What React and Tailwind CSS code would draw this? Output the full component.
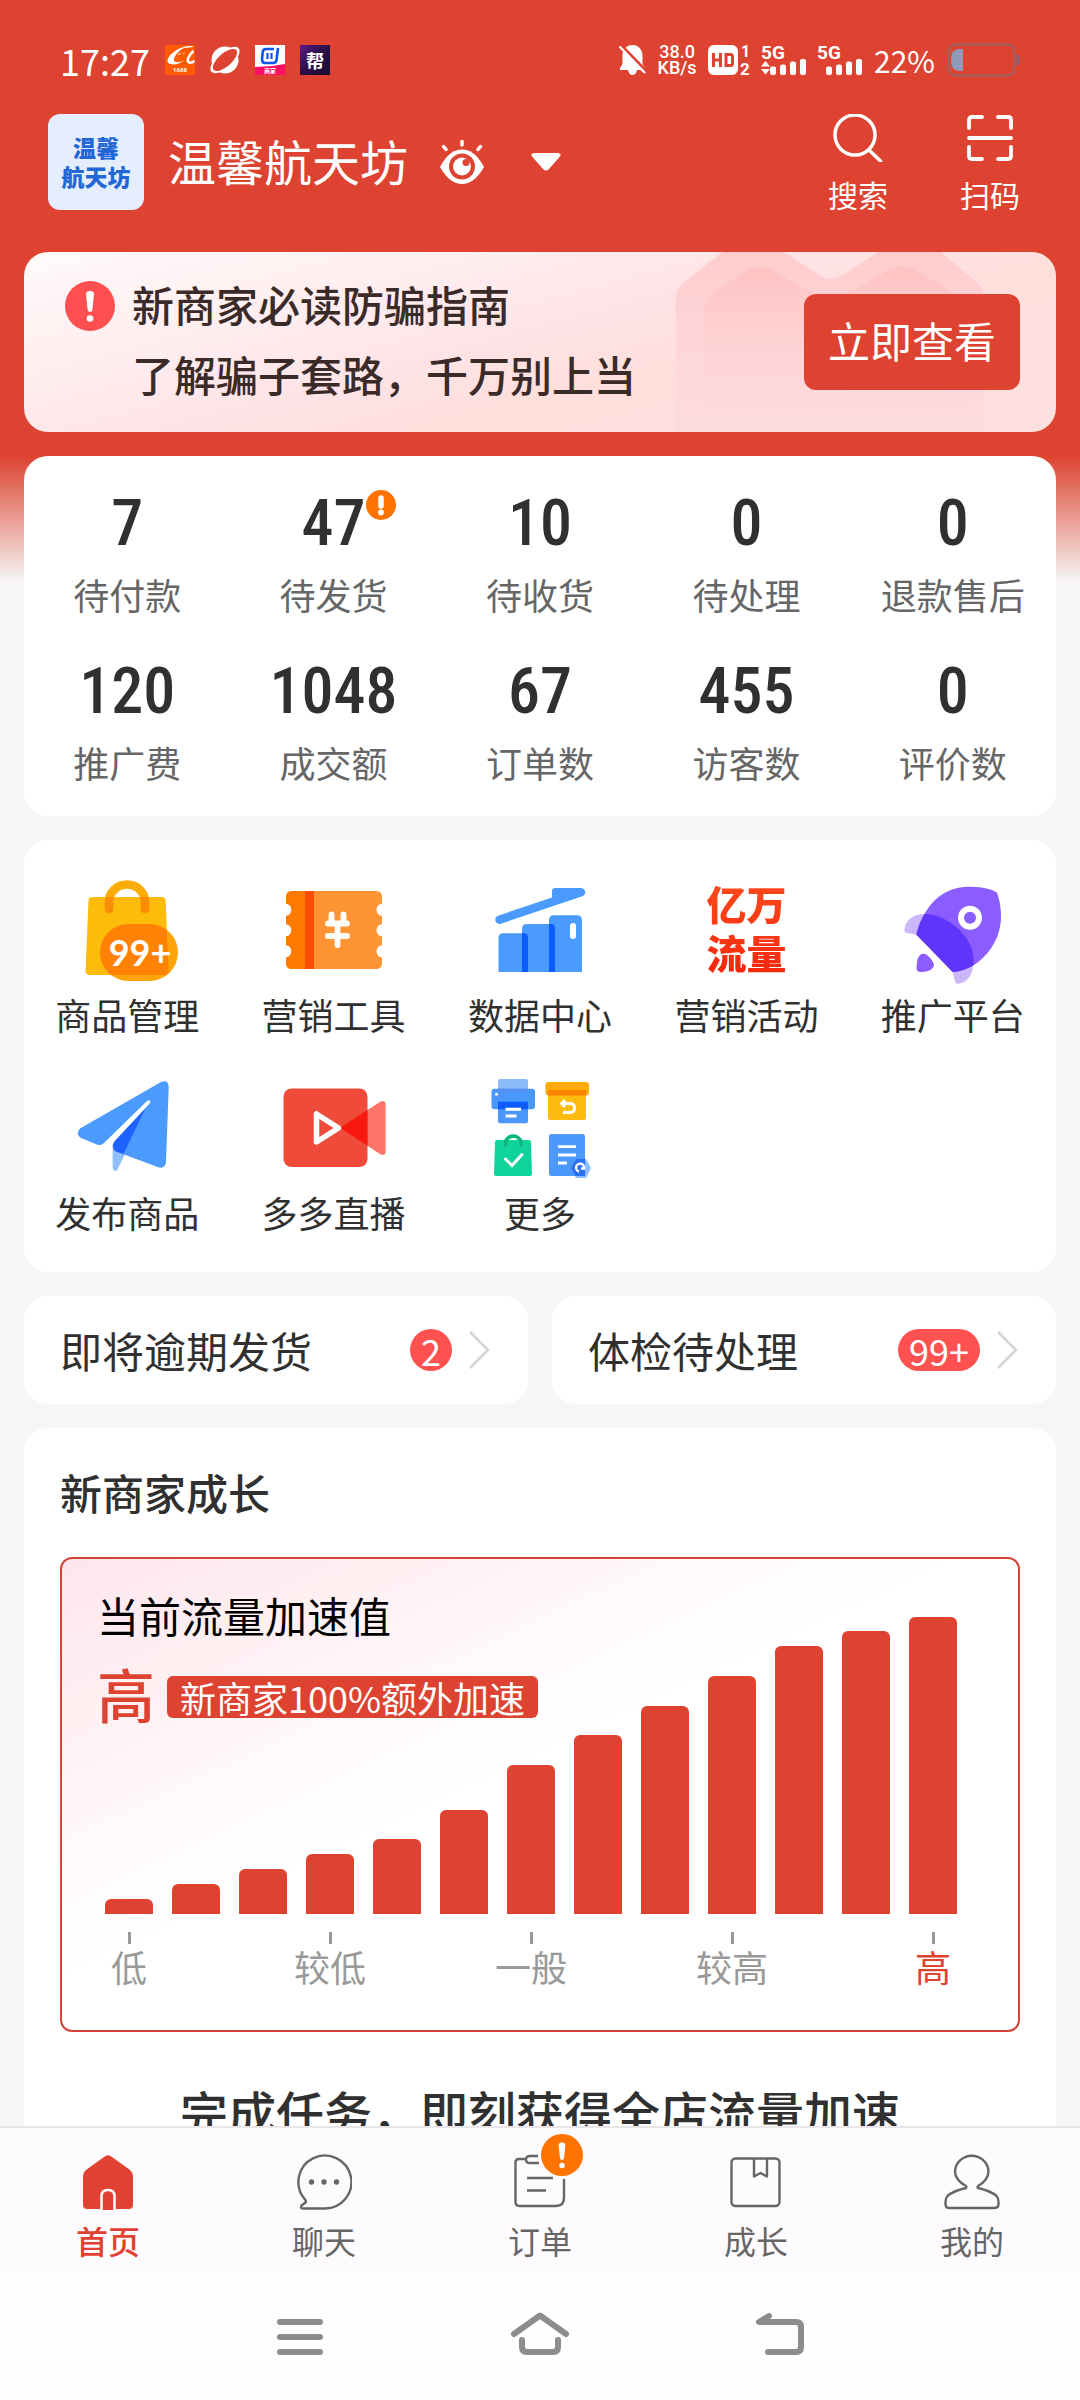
import React from "react";

const stats = [
  { value: "7", label: "待付款" },
  { value: "47", label: "待发货", alert: true },
  { value: "10", label: "待收货" },
  { value: "0", label: "待处理" },
  { value: "0", label: "退款售后" },
  { value: "120", label: "推广费" },
  { value: "1048", label: "成交额" },
  { value: "67", label: "订单数" },
  { value: "455", label: "访客数" },
  { value: "0", label: "评价数" },
];

const bars = [
  { h: 15, label: "低" },
  { h: 30 },
  { h: 45 },
  { h: 60, label: "较低" },
  { h: 75 },
  { h: 104 },
  { h: 149, label: "一般" },
  { h: 179 },
  { h: 208 },
  { h: 238, label: "较高" },
  { h: 268 },
  { h: 283 },
  { h: 297, label: "高", active: true },
];

/* ---------- status bar ---------- */

function AlibabaIcon() {
  return (
    <svg viewBox="0 0 30 30" className="size-[30px]" aria-hidden="true">
      <rect width="30" height="30" fill="#ff5a00" />
      <path d="M29 1.5C19-1 5 7 2.500 15C1.500 20.500 12 21 19 15.500C14 17.500 8.500 18 9 14.500C9.500 10 15 4 20 3C23 2.400 25 3 29 1.500Z" fill="#fff" />
      <path d="M13 9.500l3-1M18 8.500l1.500-.5" stroke="#fff" strokeWidth="1" />
      <path d="M28.500 6C24 10 21.500 15 23.500 17C25 18.300 27.500 17.500 29.500 16" fill="none" stroke="#fff" strokeWidth="2.600" />
      <text x="15" y="27" textAnchor="middle" fontSize="6" fontWeight="700" fill="#fff" fontFamily="Roboto, sans-serif">1688</text>
    </svg>
  );
}

function PlanetIcon() {
  return (
    <svg viewBox="0 0 30 30" className="size-[30px]" aria-hidden="true">
      <circle cx="15" cy="15" r="13.500" fill="#fff" />
      <ellipse cx="15" cy="15" rx="18" ry="8" transform="rotate(-41 15 15)" fill="#fff" />
      <ellipse cx="15" cy="15" rx="15" ry="6.500" transform="rotate(-41 15 15)" fill="#dd4330" />
    </svg>
  );
}

function ShopIcon() {
  return (
    <svg viewBox="0 0 30 30" className="size-[30px]" aria-hidden="true">
      <rect width="30" height="30" fill="#fff" />
      <path d="M0 22Q15 22 30 19V30H0Z" fill="#ff0f63" />
      <path d="M19 4H11Q8 4 7.700 7L7 14Q7 18 10 18H18Q21 18 21.500 15L23 3" fill="none" stroke="#0a55f0" strokeWidth="2.600" />
      <path d="M12.500 8v6M16.500 8v6" stroke="#0a55f0" strokeWidth="2.200" />
      <text x="15" y="28" textAnchor="middle" fontSize="6" fontWeight="700" fill="#fff" fontFamily="'Noto Sans CJK SC', sans-serif">商家</text>
    </svg>
  );
}

function HelpIcon() {
  return (
    <span className="flex size-[30px] items-center justify-center bg-linear-to-br from-[#5b1a8c] via-[#2a0f45] to-[#1b0b33] text-[18px] leading-[30px] font-bold text-white">
      帮
    </span>
  );
}

function BellOff() {
  return (
    <svg viewBox="0 0 27 30" className="h-[30px] w-[27px]" aria-hidden="true">
      <path d="M13.500 0C19.500 0 23.500 4.500 23.500 11V19L26 23V25H1V23L3.500 19V11C3.500 4.500 7.500 0 13.500 0ZM9 25H18Q17 30 13.500 30Q10 30 9 25Z" fill="#fff" />
      <path d="M2 0L28 27" stroke="#dd4330" strokeWidth="3" />
      <path d="M.5 1.500L26 28" stroke="#fff" strokeWidth="2.200" />
    </svg>
  );
}

function Signal({ arrows }) {
  return (
    <svg viewBox="0 -6 45 42" className="h-[42px] w-[45px]" aria-label="5G 信号" role="img">
      <text x="0" y="14" fontSize="19" fontWeight="700" fill="#fff" fontFamily="Roboto, sans-serif">5G</text>
      <rect x="9" y="21.500" width="6" height="8.500" rx="2" fill="#fff" />
      <rect x="19" y="19.500" width="6" height="10.500" rx="2" fill="#fff" />
      <rect x="29" y="16.500" width="6" height="13.500" rx="2" fill="#fff" />
      <rect x="39" y="14" width="6" height="16" rx="2" fill="#fff" />
      {arrows && <path d="M0 21.500L4.500 16L9 21.500ZM0 24L4.500 29.500L9 24Z" fill="#fff" />}
    </svg>
  );
}

function StatusBar() {
  return (
    <div className="flex h-8 items-center justify-between pr-[60px] pl-[60px] text-white">
      <div className="flex items-center gap-[15px]">
        <time className="text-[36px] leading-8">17:27</time>
        <AlibabaIcon />
        <PlanetIcon />
        <ShopIcon />
        <HelpIcon />
      </div>
      <div className="flex items-center gap-3">
        <div className="flex items-center gap-[11px]">
          <BellOff />
          <div className="flex w-10 flex-col items-center font-[Roboto] text-[18px] leading-4 font-medium">
            <span>38.0</span>
            <span>KB/s</span>
          </div>
          <svg viewBox="0 -6 42 42" className="size-[42px]" role="img" aria-label="HD 1 2">
            <rect width="30" height="30" rx="6" fill="#fff" />
            <path d="M5.500 8v14M12.500 8v14M5.500 15h7M18 9.500h4.500q2 0 2 2v7q0 2-2 2H18z" fill="none" stroke="#dd4330" strokeWidth="3" />
            <text x="33" y="12" fontSize="16" fontWeight="700" fill="#fff" fontFamily="Roboto, sans-serif">1</text>
            <text x="32" y="29.500" fontSize="17" fontWeight="700" fill="#fff" fontFamily="Roboto, sans-serif">2</text>
          </svg>
          <Signal arrows />
          <Signal />
        </div>
        <span className="text-[30px] leading-8">22%</span>
        <svg viewBox="0 0 73 34" className="h-[34px] w-[73px]" aria-hidden="true">
          <rect x="1.500" y="1.500" width="66" height="31" rx="7" fill="none" stroke="#a4605c" strokeWidth="2.500" />
          <path d="M16 6V28H12Q4 28 4 17Q4 6 12 6Z" fill="#8f9cb8" />
          <path d="M69.500 11Q72.500 12 72.500 17Q72.500 22 69.500 23Z" fill="#7d6478" />
        </svg>
      </div>
    </div>
  );
}

/* ---------- header ---------- */

function Header() {
  return (
    <header className="mt-[38px] flex items-start justify-between pr-[60px] pl-12 text-white">
      <div className="flex items-center">
        <div className="flex size-24 flex-col items-center justify-center rounded-xl bg-[#e4eeff] text-[23px] leading-[29px] font-black text-[#2367d6]">
          <span>温馨</span>
          <span>航天坊</span>
        </div>
        <button type="button" className="ml-6 flex items-center">
          <h1 className="pb-1 text-[48px] leading-[60px] font-normal">温馨航天坊</h1>
          <svg viewBox="0 0 44 44" className="ml-8 size-11" aria-hidden="true">
            <path d="M0 27C7 14 14 9.500 22 9.500S37 14 44 27C37 39 30 44 22 44S7 39 0 27Z" fill="#fff" />
            <circle cx="22" cy="26.500" r="13" fill="#dd4330" />
            <circle cx="22" cy="26.500" r="9" fill="#fff" />
            <circle cx="26" cy="22.500" r="3.500" fill="#dd4330" />
            <path d="M22 1.500V5M3.500 6.500L6 9.500M40.500 6.500L38 9.500" stroke="#fff" strokeWidth="3.500" strokeLinecap="round" />
          </svg>
          <svg viewBox="0 0 30 18" className="ml-[47px] h-[18px] w-[30px]" aria-hidden="true">
            <path d="M3 0H27Q31.500 .8 28.500 4L18 16Q15 19 12 16L1.500 4Q-1.500 .8 3 0Z" fill="#fff" />
          </svg>
        </button>
      </div>
      <div className="flex gap-[72px]">
        <button type="button" className="flex flex-col items-center gap-[14px]">
          <svg viewBox="0 0 50 48" className="h-12 w-[50px]" fill="none" stroke="#fff" strokeWidth="3.500" strokeLinecap="round" aria-hidden="true">
            <circle cx="22" cy="21" r="20" />
            <path d="M36.500 36.500L47.500 47" />
          </svg>
          <span className="text-[30px] leading-9">搜索</span>
        </button>
        <button type="button" className="flex flex-col items-center gap-[14px]">
          <svg viewBox="0 0 48 48" className="size-12" fill="none" stroke="#fff" strokeWidth="3.800" strokeLinecap="round" aria-hidden="true">
            <path d="M3 14V6Q3 3 6 3H16M32 3H42Q45 3 45 6V14M3 33V42Q3 45 6 45H16M32 45H42Q45 45 45 42V33M3 24H45" />
          </svg>
          <span className="text-[30px] leading-9">扫码</span>
        </button>
      </div>
    </header>
  );
}

function Exclaim({ className, color }) {
  return (
    <svg viewBox="0 0 50 50" className={className} role="img" aria-label="提醒">
      <circle cx="25" cy="25" r="25" fill={color} />
      <path d="M21 13Q21 10 25 10T29 13L27.500 28Q27.200 31 25 31T22.500 28Z" fill="#fff" />
      <circle cx="25" cy="37.500" r="3.300" fill="#fff" />
    </svg>
  );
}

function Banner() {
  return (
    <section className="relative mx-6 mt-10 flex items-center justify-between overflow-hidden rounded-3xl bg-[linear-gradient(165deg,#fffafa_0%,#ffeff1_25%,#fee3e6_48%,#fedfdc_62%,#fddfde_100%)] pt-[17px] pr-9 pb-[23px] pl-[41px]">
      <svg viewBox="0 0 312 180" className="absolute top-0 right-[70px] h-full w-[312px]" aria-hidden="true">
        <defs>
          <linearGradient id="roof" x1="0" y1="0" x2="0" y2="1">
            <stop offset="0" stopColor="#ffcccc" />
            <stop offset="1" stopColor="#fdd8e0" stopOpacity=".5" />
          </linearGradient>
          <linearGradient id="wall" x1="0" y1="0" x2="0" y2="1">
            <stop offset="0" stopColor="#ffc3c3" />
            <stop offset=".95" stopColor="#fed6d8" stopOpacity=".1" />
          </linearGradient>
          <linearGradient id="edge" x1="0" y1="0" x2="0" y2="1">
            <stop offset="0" stopColor="#ffe2e2" />
            <stop offset=".8" stopColor="#ffe2e2" stopOpacity="0" />
          </linearGradient>
        </defs>
        <path d="M1 182V46Q1 36 8 31L50-2H108L147 23Q157 29 167 23L206-2H266L304 30Q311 36 311 46V182Z" fill="url(#roof)" stroke="url(#edge)" strokeWidth="2" />
        <path d="M30 158V58Q30 46 40 40L72 19Q86 11 98 18L133 38Q155 50 180 38L215 18Q228 11 242 18L288 46V158Z" fill="url(#wall)" />
      </svg>
      <div className="relative flex items-start">
        <Exclaim className="mt-3 size-[50px]" color="#ff4f50" />
        <p className="ml-[17px] text-[42px] leading-[70px] font-medium text-[#3a2b29]">
          新商家必读防骗指南
          <br />
          了解骗子套路，千万别上当
        </p>
      </div>
      <button type="button" className="relative mt-1.5 h-24 rounded-xl bg-[#dd4330] px-6 pb-1 text-[42px] leading-[60px] text-white">
        立即查看
      </button>
    </section>
  );
}

function Stats() {
  return (
    <section className="mx-6 mt-6 grid grid-cols-5 gap-y-11 rounded-3xl bg-white pt-[38px] pb-[30px]">
      {stats.map((s) => (
        <a href="#" key={s.label} className="flex flex-col items-center gap-4">
          <span className="relative font-['Roboto_Condensed',Roboto,sans-serif] text-[64px] leading-[60px] font-medium text-[#303030]">
            {s.value}
            {s.alert && (
              <svg viewBox="0 0 30 30" className="absolute -top-1 left-full size-[30px]" aria-label="提醒" role="img">
                <circle cx="15" cy="15" r="15" fill="#ff7300" />
                <path d="M15 8V16" stroke="#fff" strokeWidth="5.500" strokeLinecap="round" />
                <circle cx="15" cy="22.500" r="2.900" fill="#fff" />
              </svg>
            )}
          </span>
          <span className="text-[36px] leading-[48px] whitespace-nowrap text-[#666]">{s.label}</span>
        </a>
      ))}
    </section>
  );
}

/* ---------- feature icons ---------- */

function Icon({ children }) {
  return (
    <svg viewBox="0 0 108 108" className="size-[108px]" aria-hidden="true">
      {children}
    </svg>
  );
}

function BagIcon() {
  const body = "M19.500 21H88.500Q92.500 21 92.700 25L95.500 95Q95.500 99 91.500 99H17Q12.500 99 12.500 95L15.500 25Q15.500 21 19.500 21Z";
  const handle = "M36 33V26A18 17.500 0 0 1 72 26V33";
  return (
    <Icon>
      <clipPath id="bagBody"><path d={body} /></clipPath>
      <path d={body} fill="#fdbc09" />
      <path d={handle} fill="none" stroke="#fbac05" strokeWidth="8.500" strokeLinecap="round" />
      <rect x="27" y="48" width="78" height="57" rx="28.500" fill="#fda50a" />
      <g clipPath="url(#bagBody)">
        <path d={handle} fill="none" stroke="#fb8c05" strokeWidth="8.500" strokeLinecap="round" />
        <rect x="27" y="48" width="78" height="57" rx="28.500" fill="#ff8204" />
      </g>
      <text x="67" y="90" textAnchor="middle" fontSize="36" fontWeight="700" fill="#fff" fontFamily="Lato, sans-serif">99+</text>
    </Icon>
  );
}

function TicketIcon() {
  return (
    <Icon>
      <clipPath id="ticket">
        <path d="M12 15H96Q102 15 102 21V27.500A6.300 6.300 0 0 0 102 40V48A6.300 6.300 0 0 0 102 60.500V69A6.300 6.300 0 0 0 102 81.500V87Q102 93 96 93H12Q6 93 6 87V81.500A6.300 6.300 0 0 0 6 69V60.500A6.300 6.300 0 0 0 6 48V40A6.300 6.300 0 0 0 6 27.500V21Q6 15 12 15Z" />
      </clipPath>
      <g clipPath="url(#ticket)">
        <rect width="108" height="108" fill="#ff9435" />
        <rect width="25" height="108" fill="#ff7a00" />
        <rect x="25" width="9" height="108" fill="#ff4d00" />
      </g>
      <path d="M51.500 38.500V47M63.500 38.500V47M48 47.500H67M48 60H67M57.500 50V69" stroke="#fff" strokeWidth="5.800" strokeLinecap="round" />
    </Icon>
  );
}

function ChartIcon() {
  return (
    <Icon>
      <path d="M13.500 43.700L95 16.300" stroke="#4b9bff" strokeWidth="8.500" strokeLinecap="round" />
      <path d="M69 12H95V18L66 26V15Q66 12 69 12Z" fill="#4b9bff" />
      <path d="M12.500 96V62Q12.500 57.300 17 57.300H36V53Q36 48 41 48H63V44.500Q63 39.300 68 39.300H91Q96 39.300 96 44.500V96Z" fill="#4b9bff" />
      <path d="M36 57.300H38Q42 57.300 42 61.500V96H36ZM63 48H65Q69 48 69 52.500V96H63Z" fill="#0b5cff" />
      <rect x="84" y="47" width="6" height="16" rx="3" fill="#fff" />
    </Icon>
  );
}

function TrafficIcon() {
  return (
    <span className="flex size-[108px] flex-col items-center justify-center bg-linear-to-b from-[#ff4a1c] to-[#f5200a] bg-clip-text pb-1 text-[40px] leading-[49px] font-black text-transparent">
      <span>亿万</span>
      <span>流量</span>
    </span>
  );
}

function RocketIcon() {
  const body = "M97.700 16.300C101 24 102 34 102 42C101 66 86 82 75 89C68 93 60 96 53.600 96L17.400 58.700C19 50 25 35 36 24C48 13 60 10.700 72 10.700C84 11 92 13 97.700 16.300Z";
  const fin = "M5.500 55C5 46 14 37 25 38C50 38 75 62 74.600 84C74.600 98 69 107 59 107.700Q56 108 56 105L53.600 96L17.400 58.700L8 57Q5.500 57 5.500 55Z";
  return (
    <Icon>
      <clipPath id="rocketBody"><path d={body} /></clipPath>
      <path d={fin} fill="#cbb8fc" />
      <path d={body} fill="#8b5cff" />
      <path d={fin} fill="#5f35fb" clipPath="url(#rocketBody)" />
      <circle cx="71" cy="41.700" r="9" fill="#8b5cff" stroke="#fff" strokeWidth="6" />
      <path d="M18.500 83Q22 75 28 79Q34 84 35 89Q34 96 22 96Q17 96 17.500 91Z" fill="#8b5cff" />
    </Icon>
  );
}

function PlaneIcon() {
  return (
    <Icon>
      <path d="M39.600 70V93Q40 98 44 96.500L53 78Z" fill="#90bffc" />
      <path d="M7 54.500L88 8Q95.500 5 95.700 13L93 88Q92.500 94.500 86 93.500L43 77.500Q38 74 41 68L77.500 28.500Q77 25 74 27L31 69Q28 72 24 70.500L8 64Q2 60 7 54.500Z" fill="#4b9bff" />
      <path d="M72 35L41 68Q38 74 43 77.500L50.500 80Z" fill="#1f62ff" />
    </Icon>
  );
}

function VideoIcon() {
  const cone = "M60 53.700L100 28Q105.600 25 105.600 31V77Q105.600 83 100 80Z";
  return (
    <Icon>
      <clipPath id="camera"><rect x="3.500" y="14.500" width="84" height="78.500" rx="8" /></clipPath>
      <path d={cone} fill="#ff7567" />
      <rect x="3.500" y="14.500" width="84" height="78.500" rx="8" fill="#ee4b3a" />
      <path d={cone} fill="#f9180e" clipPath="url(#camera)" />
      <path d="M36.500 40V68L58.500 54Z" fill="none" stroke="#fff" strokeWidth="5.500" strokeLinejoin="round" />
    </Icon>
  );
}

function MoreIcon() {
  return (
    <Icon>
      <rect x="12" y="5" width="30" height="14" rx="2" fill="#8ebcfb" />
      <rect x="5.500" y="14.700" width="43.500" height="20.500" rx="3" fill="#4b98fc" />
      <rect x="12" y="14.700" width="30" height="4" fill="#5690f3" />
      <rect x="12" y="27.700" width="30" height="21.500" rx="2" fill="#4b98fc" />
      <rect x="12" y="27.700" width="30" height="7.500" fill="#0d5cff" />
      <path d="M19.500 35.200H35M19.500 42H30.500" stroke="#fff" strokeWidth="3" />
      <circle cx="10.500" cy="20.300" r="1.500" fill="#fff" />

      <rect x="62" y="16" width="38" height="30" rx="2" fill="#febc10" />
      <rect x="59.500" y="8" width="43.500" height="13.500" rx="3" fill="#ffaa05" />
      <rect x="62" y="16" width="38" height="5.500" fill="#ff8403" />
      <path d="M79 26L75.500 29.500L79 33M76 29.500H84Q88.500 29.500 88.500 34Q88.500 38.500 84 38.500H77" fill="none" stroke="#fff" strokeWidth="2.800" />

      <path d="M11 66H43Q45 66 45 68L46 100Q46 102 44 102H10Q8 102 8 100L9 68Q9 66 11 66Z" fill="#0ed49b" />
      <path d="M19.500 71V68A8 7.800 0 0 1 35 68V71" fill="none" stroke="#0bb87c" strokeWidth="3.600" strokeLinecap="round" />
      <path d="M19.500 85L26 91.500L36 80.500" fill="none" stroke="#fff" strokeWidth="3" strokeLinecap="round" />

      <rect x="63" y="60" width="36" height="42" rx="2.500" fill="#4b9afb" />
      <path d="M72 72.700H90M72 81H90M72 89H81" stroke="#fff" strokeWidth="2.800" />
      <path d="M90 85H100L105 94L100 104H90L85 94Z" fill="#8dbdfd" />
      <path d="M90 85H99V102H89L85 94Z" fill="#2a71f5" />
      <path d="M93 97.500A4 4 0 1 1 98 94.500H95" fill="none" stroke="#fff" strokeWidth="2.400" />
    </Icon>
  );
}

const features = [
  { label: "商品管理", Art: BagIcon },
  { label: "营销工具", Art: TicketIcon },
  { label: "数据中心", Art: ChartIcon },
  { label: "营销活动", Art: TrafficIcon },
  { label: "推广平台", Art: RocketIcon },
  { label: "发布商品", Art: PlaneIcon },
  { label: "多多直播", Art: VideoIcon },
  { label: "更多", Art: MoreIcon },
];

function Features() {
  return (
    <section className="mx-6 mt-6 grid grid-cols-5 gap-y-9 rounded-3xl bg-white py-9">
      {features.map(({ label, Art }) => (
        <a href="#" key={label} className="flex flex-col items-center gap-1.5">
          <Art />
          <span className="text-[36px] leading-[48px] whitespace-nowrap text-[#303030]">{label}</span>
        </a>
      ))}
    </section>
  );
}

function TodoCard({ label, count }) {
  return (
    <a href="#" className="flex h-[108px] items-center rounded-3xl bg-white px-9">
      <span className="flex-1 text-[42px] leading-[60px] text-[#303030]">{label}</span>
      <span className="flex h-[42px] min-w-[42px] items-center justify-center rounded-full bg-[#ff5150] px-[11px] text-[36px] leading-[42px] text-white">
        {count}
      </span>
      <svg viewBox="0 0 24 40" className="ml-4 h-10 w-6" fill="none" stroke="#d4d4d4" strokeWidth="2.500" aria-hidden="true">
        <path d="M2 2L20 20L2 38" />
      </svg>
    </a>
  );
}

function Growth() {
  return (
    <section className="mx-6 mt-6 rounded-t-3xl bg-white px-9 pt-[34px] pb-12">
      <h2 className="text-[42px] leading-[60px] font-medium text-[#303030]">新商家成长</h2>
      <div className="mt-[35px] grid rounded-xl border-2 border-[#d5443a] bg-[linear-gradient(155deg,#fde6ed_0%,#fff0f2_18%,#fffafc_34%,#ffffff_46%)] pt-8 pb-[42px]">
        <div className="col-start-1 row-start-1 flex flex-col gap-7 pl-[35px]">
          <h3 className="text-[42px] leading-[48px] text-black">当前流量加速值</h3>
          <div className="flex items-start gap-3">
            <strong className="text-[58px] leading-[52px] font-medium text-[#dd4330]">高</strong>
            <span className="mt-[9px] rounded-md bg-[#dd4330] px-[13px] text-[36px] leading-[42px] text-white">新商家100%额外加速</span>
          </div>
        </div>
        <div className="col-start-1 row-start-1 flex items-start justify-between pr-[61px] pl-[43px]">
          {bars.map((b) => (
            <div key={b.h} className="flex w-12 flex-col items-center">
              <div className="flex h-[323px] w-full items-end">
                <div className="w-full rounded-t-md bg-[#dd4330]" style={{ height: b.h }} />
              </div>
              {b.label && (
                <>
                  <div className="mt-[18px] h-3 w-[3px] bg-[#999]" />
                  <span className={b.active ? "text-[36px] leading-[44px] whitespace-nowrap text-[#dd4330]" : "text-[36px] leading-[44px] whitespace-nowrap text-[#999]"}>
                    {b.label}
                  </span>
                </>
              )}
            </div>
          ))}
        </div>
      </div>
      <p className="mt-[49px] text-center text-[48px] leading-[60px] font-medium text-[#303030]">完成任务，即刻获得全店流量加速</p>
    </section>
  );
}

/* ---------- bottom bars ---------- */

function TabSvg({ children }) {
  return (
    <svg viewBox="0 0 56 56" className="size-14" fill="none" stroke="#666" strokeWidth="2.400" strokeLinejoin="round" aria-hidden="true">
      {children}
    </svg>
  );
}

const tabs = [
  {
    label: "首页",
    active: true,
    art: (
      <TabSvg>
        <path d="M24 3Q28-.5 32 3L50 16Q53 18.500 53 23V51Q53 55 49 55H7Q3 55 3 51V23Q3 18.500 6 16Z" fill="#e14132" stroke="none" />
        <path d="M21.500 56V42Q21.500 36 28 36T34.500 42V56" fill="#e14132" stroke="#fff" strokeWidth="2.500" />
      </TabSvg>
    ),
  },
  {
    label: "聊天",
    art: (
      <TabSvg>
        <path d="M28 54.500H7Q4 54.500 5.500 51.500L9.500 48.500Q10.500 47 9 45.500A26.500 26.500 0 1 1 28 54.500Z" />
        <g fill="#666" stroke="none">
          <circle cx="15.500" cy="28" r="2.700" />
          <circle cx="28" cy="28" r="2.700" />
          <circle cx="40.500" cy="28" r="2.700" />
        </g>
      </TabSvg>
    ),
  },
  {
    label: "订单",
    badge: true,
    art: (
      <TabSvg>
        <path d="M14 5H7Q3.500 5 3.500 8.500V48Q3.500 52 7.500 52H44Q52 52 52 44V25M26 2H18Q14 2 14 5.500T18 9H27M15 24H41M15 36.500H34" />
      </TabSvg>
    ),
  },
  {
    label: "成长",
    art: (
      <TabSvg>
        <rect x="3.500" y="4.500" width="48" height="47.500" rx="4" />
        <path d="M26 4.500V22.500L32.500 19L39 22.500V4.500" />
      </TabSvg>
    ),
  },
  {
    label: "我的",
    art: (
      <TabSvg>
        <path d="M22 34Q23 33 22 32Q11 26 11 17A16.800 16.500 0 0 1 44.500 17Q44.500 26 34 32Q33 33 34 34Q47 37 52.500 42Q54.500 44 54.500 48V50Q54.500 54 50.500 54H5Q1.500 54 1.500 50V48Q1.500 44 3.500 42Q9 37 22 34Z" />
      </TabSvg>
    ),
  },
];

function TabBar() {
  return (
    <nav className="grid grid-cols-5 border-t-2 border-[#e8e6e8] bg-[#fefbfe] pt-[26px] pb-4">
      {tabs.map((t) => (
        <a href="#" key={t.label} className="flex flex-col items-center gap-2.5">
          <span className="relative">
            {t.art}
            {t.badge && <Exclaim className="absolute -top-5 left-[29px] size-[42px]" color="#ff7300" />}
          </span>
          <span className={t.active ? "text-[32px] leading-10 font-medium text-[#e14132]" : "text-[32px] leading-10 text-[#666]"}>{t.label}</span>
        </a>
      ))}
    </nav>
  );
}

function SystemBar() {
  return (
    <nav className="flex h-[124px] items-center justify-center gap-[180px] bg-[#fefefe] pb-1.5">
      <button type="button" aria-label="最近任务">
        <svg viewBox="0 0 60 48" className="h-12 w-[60px]" stroke="#8c8c8c" strokeWidth="6" strokeLinecap="round">
          <path d="M10 11H50M10 26H50M10 41H50" />
        </svg>
      </button>
      <button type="button" aria-label="主屏幕">
        <svg viewBox="0 0 60 48" className="h-12 w-[60px]" fill="none" stroke="#8c8c8c" strokeWidth="6" strokeLinecap="round" strokeLinejoin="round">
          <path d="M4 23L30 4.500L56 23M12 29V36Q12 41 17 41H43Q48 41 48 36V29" />
        </svg>
      </button>
      <button type="button" aria-label="返回">
        <svg viewBox="0 0 60 48" className="h-12 w-[60px]" fill="none" stroke="#8c8c8c" strokeWidth="6" strokeLinecap="round" strokeLinejoin="round">
          <path d="M19 5L9 11H46Q51 11 51 16V36Q51 41 46 41H18" />
        </svg>
      </button>
    </nav>
  );
}

export default function App() {
  return (
    <div className="flex h-screen flex-col bg-[#f6f6f6] font-['Noto_Sans_CJK_SC',sans-serif]">
      <main className="min-h-0 flex-1 overflow-y-auto [scrollbar-width:none]">
        <div className="bg-[linear-gradient(to_bottom,#dd4330_0,#dd4330_456px,#f6f6f6_582px)] pt-11">
          <StatusBar />
          <Header />
          <Banner />
          <Stats />
          <Features />
          <div className="mx-6 mt-6 grid grid-cols-2 gap-6">
            <TodoCard label="即将逾期发货" count="2" />
            <TodoCard label="体检待处理" count="99+" />
          </div>
          <Growth />
        </div>
      </main>
      <TabBar />
      <SystemBar />
    </div>
  );
}
